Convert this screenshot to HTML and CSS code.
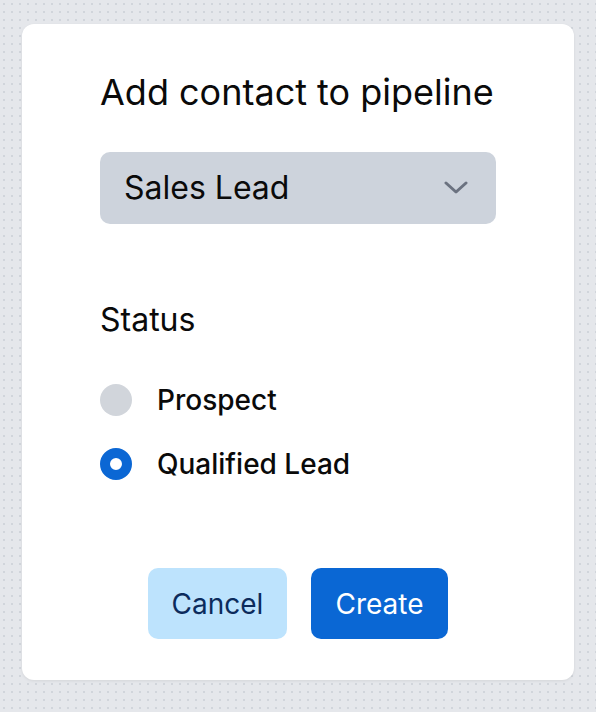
FILE: index.html
```html
<!DOCTYPE html>
<html lang="en">
<head>
<meta charset="utf-8">
<title>Add contact to pipeline</title>
<link rel="stylesheet" href="styles.css">
</head>
<body>
<div class="page">
  <div class="card">
    <h1 class="title">Add contact to pipeline</h1>
    <div class="select">
      <span class="select-value">Sales Lead</span>
      <svg class="chevron" width="24" height="14" viewBox="0 0 24 14" aria-hidden="true">
        <path d="M2 2 L12 11 L22 2" fill="none" stroke="#6b7280" stroke-width="3" stroke-linecap="round" stroke-linejoin="round"/>
      </svg>
    </div>
    <div class="status-label">Status</div>
    <div class="radios">
      <div class="radio-row">
        <span class="radio"></span>
        <span class="radio-label">Prospect</span>
      </div>
      <div class="radio-row">
        <span class="radio radio-checked"></span>
        <span class="radio-label">Qualified Lead</span>
      </div>
    </div>
    <div class="actions">
      <button class="btn btn-cancel">Cancel</button>
      <button class="btn btn-create">Create</button>
    </div>
  </div>
</div>
</body>
</html>
```
FILE: styles.css
```css
* { box-sizing: border-box; }
html, body { margin: 0; padding: 0; }
body {
  width: 596px;
  height: 712px;
  background-color: #e5e7eb;
  background-image: radial-gradient(circle, #d1d5db 1px, transparent 1.3px);
  background-size: 8px 8px;
  background-position: 0 0;
  font-family: Inter, "Noto Sans", sans-serif;
  color: #0a0a0a;
}
.page {
  padding: 24px 22px 32px;
}
.card {
  width: 552px;
  height: 656px;
  background: #ffffff;
  border-radius: 12px;
  box-shadow: 0 1px 3px rgba(0,0,0,0.08);
  padding: 48px 78px 0;
  display: flex;
  flex-direction: column;
}
.title {
  margin: 0;
  font-size: 36px;
  line-height: 40px;
  font-weight: 400;
  color: #0a0a0a;
}
.select {
  margin-top: 40px;
  height: 72px;
  background: #cdd3dc;
  border-radius: 10px;
  display: flex;
  align-items: center;
  justify-content: space-between;
  padding: 0 28px 0 24px;
}
.select-value {
  font-size: 32px;
  line-height: 36px;
  color: #0a0a0a;
}
.chevron { display: block; }
.status-label {
  margin-top: 78px;
  font-size: 32px;
  line-height: 36px;
}
.radios {
  margin-top: 46px;
  display: flex;
  flex-direction: column;
  gap: 32px;
}
.radio-row {
  display: flex;
  align-items: center;
  gap: 25px;
  height: 32px;
}
.radio {
  width: 32px;
  height: 32px;
  border-radius: 50%;
  background: #d1d5db;
  flex: none;
}
.radio-checked {
  background: #ffffff;
  border: 10px solid #0b67d4;
}
.radio-label {
  font-size: 28px;
  font-weight: 500;
  line-height: 32px;
}
.actions {
  margin-top: 88px;
  display: flex;
  justify-content: center;
  gap: 24px;
}
.btn {
  height: 71px;
  border: none;
  border-radius: 10px;
  font-family: Inter, "Noto Sans", sans-serif;
  font-size: 28px;
  padding: 0;
}
.btn-cancel {
  width: 139px;
  background: #bde3fd;
  color: #0c2b5c;
}
.btn-create {
  width: 137px;
  background: #0a67d4;
  color: #ffffff;
}
```
